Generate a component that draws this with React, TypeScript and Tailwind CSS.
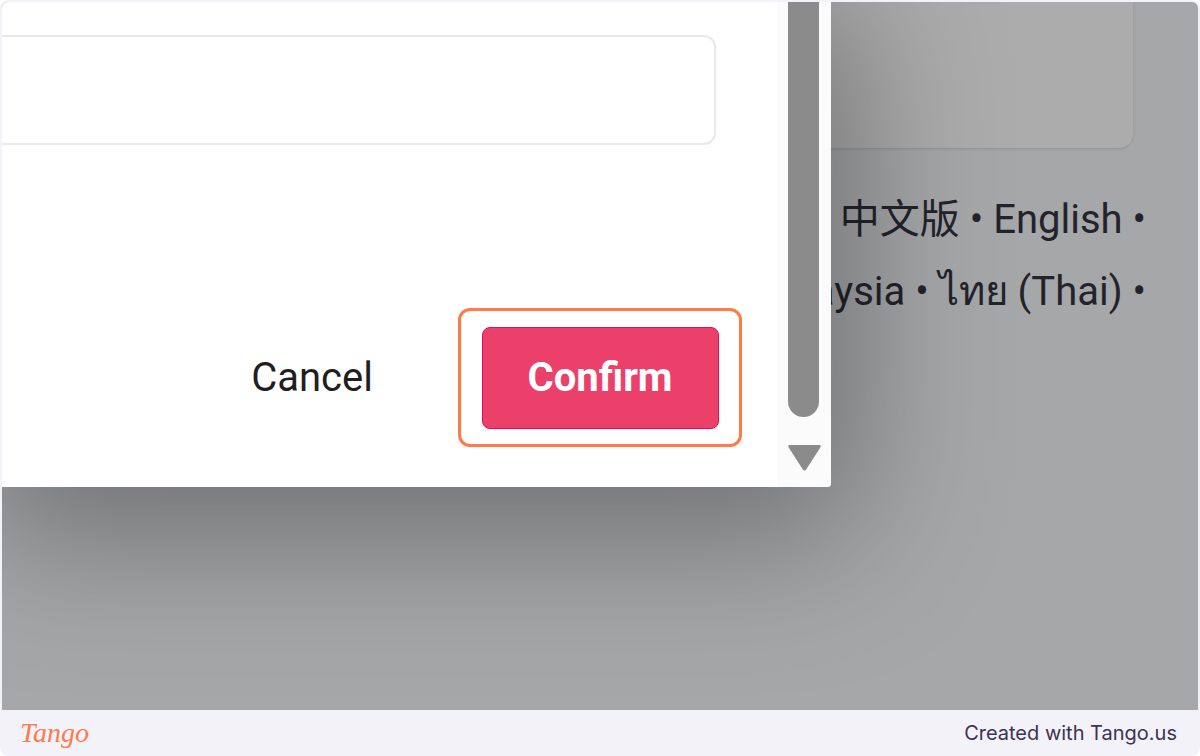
export default function App() {
  return (
    <div className="w-[1200px] h-[756px] bg-[#f3f2f8] rounded-[8px] flex flex-col overflow-hidden">
      {/* screenshot area */}
      <div className="relative mx-[2px] mt-[2px] h-[708px] overflow-hidden rounded-t-[6px] bg-[#a6a7a9] font-['Roboto',sans-serif]">
        {/* page behind the dialog */}
        <div className="flex flex-col items-end pr-[65px]">
          <div className="w-[800px] h-[166px] -mt-[20px] rounded-b-[14px] bg-[#acacac] shadow-[0_1px_3px_rgba(0,0,0,0.12)]" />
        </div>
        <div className="mt-[36px] pr-[52px] text-right text-[40px] leading-[72px] text-[#23232b] whitespace-nowrap font-['Roboto','Noto_Sans_CJK_SC','Noto_Sans',sans-serif]">
          <div>Bahasa Indonesia • 中文版 • English •</div>
          <div>Bahasa Malaysia • ไทย (Thai) •</div>
        </div>

        {/* dialog */}
        <div className="absolute left-0 top-0 w-[829px] h-[485px] flex bg-white rounded-br-[4px] shadow-[0_24px_150px_20px_rgba(0,0,0,0.35)]">
          <div className="flex-1 flex flex-col">
            <div className="mt-[33px] -ml-[20px] w-[734px] h-[110px] border-2 border-[#e8e8e8] rounded-[12px]" />
            <div className="mt-[163px] flex items-center justify-end pr-[35px]">
              <span className="mr-[85px] text-[40px] text-[#1f1f1f]">Cancel</span>
              <div className="w-[284px] h-[139px] flex items-center justify-center border-[3px] border-[#ff7a45] rounded-[12px]">
                <button className="w-[237px] h-[102px] rounded-[8px] bg-[#eb406a] border border-[#e6104f] text-white text-[40px] font-bold">
                  Confirm
                </button>
              </div>
            </div>
          </div>
          <div className="w-[54px] flex flex-col items-center bg-[#fbfbfb] rounded-br-[4px]">
            <div className="w-[31px] h-[415px] -ml-[1px] bg-[#8b8b8b] rounded-b-full" />
            <svg className="mt-[26px]" width="37" height="29" viewBox="0 0 37 29">
              <path d="M4 2 H33 Q36 2 34 5 L20.5 26 Q18.5 29 16.5 26 L3 5 Q1 2 4 2 Z" fill="#8b8b8b" />
            </svg>
          </div>
        </div>
      </div>

      {/* footer */}
      <div className="h-[46px] flex items-center justify-between pl-[20px] pr-[23px]">
        <span className="text-[28px] italic text-[#ff7a4f] font-['Liberation_Serif',serif] leading-none">Tango</span>
        <span className="text-[20px] text-[#3d3354] font-['Inter',sans-serif]">Created with Tango.us</span>
      </div>
    </div>
  );
}
